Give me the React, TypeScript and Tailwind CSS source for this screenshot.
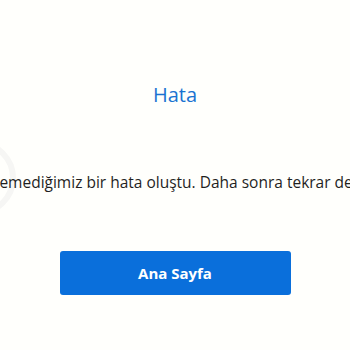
export default function App() {
  return (
    <div
      className="relative w-[350px] h-[350px] overflow-hidden bg-[#fffffc]"
      style={{ fontFamily: '"Open Sans", "Noto Sans", sans-serif' }}
    >
      <div className="absolute left-[-60px] top-[140px] w-[76px] h-[76px] rounded-full border-[6px] border-[#f6f6f4]" />
      <div className="relative flex flex-col items-center pt-[80px]">
        <h1 className="text-[20px] leading-[30px] text-[#1a73d1] font-normal">Hata</h1>
        <p className="mt-[60px] whitespace-nowrap text-[15.5px] leading-[24px] text-[#1f1f1f]">
          Öngöremediğimiz bir hata oluştu. Daha sonra tekrar deneyin.
        </p>
        <button className="mt-[57px] w-[231px] h-[44px] rounded-[3px] bg-[#0a6fdb] text-white text-[15px] font-bold">
          Ana Sayfa
        </button>
      </div>
    </div>
  );
}
